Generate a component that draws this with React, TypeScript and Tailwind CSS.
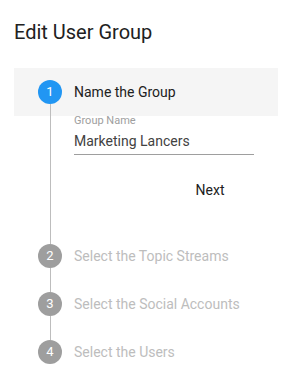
import React from "react";

const steps = ["Select the Topic Streams", "Select the Social Accounts", "Select the Users"];

export default function App() {
  return (
    <div
      className="w-[295px] h-[392px] bg-white pl-[14px] pr-[17px] pt-[18px]"
      style={{ fontFamily: "Roboto, 'Liberation Sans', sans-serif" }}
    >
      <div className="text-[20px] leading-7 text-[#212121]">Edit User Group</div>

      <div className="mt-[22px]">
        {/* active step header */}
        <div className="h-12 bg-[#f5f5f5] flex items-start px-6 pt-3">
          <div className="flex flex-col items-center w-6">
            <div className="w-6 h-6 rounded-full bg-[#2196f3] text-white text-[13px] flex items-center justify-center">
              1
            </div>
            <div className="w-px h-3 bg-[#bdbdbd]" />
          </div>
          <div className="ml-3 text-sm leading-6 text-[#212121]">Name the Group</div>
        </div>

        {/* active step content */}
        <div className="ml-[36px] border-l border-[#bdbdbd] pl-[23px] pb-9">
          <div className="w-[180px]">
            <div className="text-[11px] leading-3 text-[#9e9e9e] -mt-px">Group Name</div>
            <div className="mt-1 text-sm leading-5 text-[#424242] pb-[3px] border-b border-[#9e9e9e]">
              Marketing Lancers
            </div>
            <div className="flex justify-end mt-[17px]">
              <button className="w-[88px] h-9 text-sm text-[#212121] flex items-center justify-center">
                Next
              </button>
            </div>
          </div>
        </div>

        {steps.map((label, i) => (
          <div key={label}>
            <div className="flex items-center h-6">
              <div className="ml-6 w-6 h-6 rounded-full bg-[#9e9e9e] text-white text-[13px] flex items-center justify-center">
                {i + 2}
              </div>
              <div className="ml-3 text-sm text-[#bdbdbd]">{label}</div>
            </div>
            {i < steps.length - 1 && <div className="ml-[36px] h-6 border-l border-[#bdbdbd]" />}
          </div>
        ))}
      </div>
    </div>
  );
}
